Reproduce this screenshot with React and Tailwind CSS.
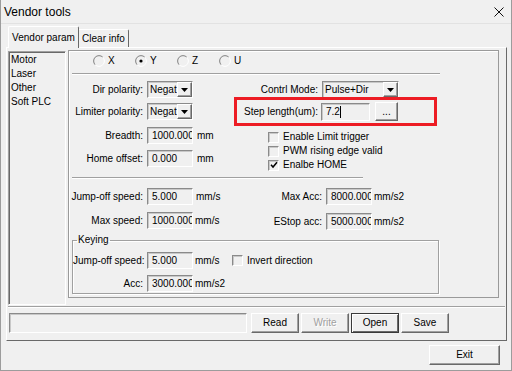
const raised =
  'border border-t-white border-l-white border-r-[#696969] border-b-[#696969] shadow-[inset_-1px_-1px_0_#a0a0a0]';
const sunken =
  'border border-t-[#8a8a8a] border-l-[#8a8a8a] border-r-white border-b-white shadow-[inset_1px_1px_0_#c8c8c8]';

const Edit = ({ className = 'w-[46px] h-[17px]', children, caret }) => (
  <div className={`${className} ${sunken} shrink-0 pl-[4px] flex items-center overflow-hidden whitespace-nowrap`}>
    {children}
    {caret && <span className="w-px h-[12px] bg-black shrink-0" />}
  </div>
);

const Arrow = () => (
  <svg width="7" height="4" viewBox="0 0 7 4">
    <polygon points="0,0 7,0 3.5,4" fill="#000" />
  </svg>
);

const Combo = ({ className, children }) => (
  <div className={`${className} h-[17px] ${sunken} shrink-0 flex items-center overflow-hidden`}>
    <span className="flex-1 pl-[2px] whitespace-nowrap overflow-hidden">{children}</span>
    <div className={`w-[15px] h-[15px] ${raised} bg-[#f0f0f0] flex items-center justify-center`}>
      <Arrow />
    </div>
  </div>
);

const Radio = ({ label, checked }) => (
  <div className="w-[42px] flex items-center">
    <svg width="12" height="12" viewBox="0 0 12 12">
      <path d="M9.8 2.2 A5.3 5.3 0 0 0 2.2 9.8" stroke="#808080" fill="none" />
      <path d="M2.2 9.8 A5.3 5.3 0 0 0 9.8 2.2" stroke="#ffffff" fill="none" />
      {checked && <circle cx="6" cy="6" r="1.6" fill="#000" />}
    </svg>
    <span className="ml-[3px]">{label}</span>
  </div>
);

const Check = ({ label, checked }) => (
  <div className="h-[14px] flex items-center">
    <div className={`w-[11px] h-[11px] ${sunken} bg-[#f0f0f0] flex items-center justify-center`}>
      {checked && (
        <svg width="8" height="8" viewBox="0 0 8 8">
          <path d="M1 3.8 L3 6 L7 1.2" stroke="#000" strokeWidth="1.5" fill="none" />
        </svg>
      )}
    </div>
    <span className="ml-[4px] whitespace-nowrap">{label}</span>
  </div>
);

const Row = ({ label, labelW = 'w-[78px]', children, className = '' }) => (
  <div className={`h-[17px] flex items-center ${className}`}>
    <span className={`${labelW} shrink-0 text-right pr-[4px] whitespace-nowrap`}>{label}</span>
    {children}
  </div>
);

const Btn = ({ children, className = 'w-[48px]', disabled, def }) => (
  <div
    className={`${className} h-[20px] flex items-center justify-center ${
      def
        ? 'border border-[#3a3a3a] shadow-[inset_1px_1px_0_#fff,inset_-1px_-1px_0_#696969]'
        : raised
    } ${disabled ? 'text-[#a0a0a0] [text-shadow:1px_1px_0_#fff]' : ''}`}
  >
    {children}
  </div>
);

const Separator = ({ className }) => (
  <div className={`${className} h-[2px] border-t border-t-[#a0a0a0] border-b border-b-white`} />
);

export default function App() {
  return (
    <div className="w-[512px] h-[371px] bg-[#f0f0f0] border-x border-b border-[#9c9c9c] flex flex-col overflow-hidden font-['Liberation_Sans',Arial,sans-serif] text-[10px] leading-[12px] text-black">
      {/* title bar */}
      <div className="h-[24px] shrink-0 flex items-center justify-between pl-[3px] pr-[7px] border-b border-[#e2e2e2]">
        <span className="text-[12px] leading-[14px]">Vendor tools</span>
        <svg width="10" height="10" viewBox="0 0 10 10">
          <path d="M0.5 0.5 L9.5 9.5 M9.5 0.5 L0.5 9.5" stroke="#111" strokeWidth="1" />
        </svg>
      </div>

      {/* tabs */}
      <div className="h-[23px] shrink-0 flex items-end pl-[7px]">
        <div className="relative z-10 -mb-px w-[71px] h-[22px] bg-[#f0f0f0] border-t border-l border-t-white border-l-white border-r border-r-[#696969] rounded-t-[2px] flex items-center justify-center">
          Vendor param
        </div>
        <div className="w-[50px] h-[18px] border-t border-t-white border-r border-r-[#696969] rounded-tr-[2px] flex items-center justify-center">
          Clear info
        </div>
      </div>

      {/* tab page */}
      <div className="ml-[5px] w-[501px] shrink-0 border border-t-white border-l-white border-r-[#696969] border-b-[#696969] pt-[2px] pb-[7px]">
        <div className="h-[255px] flex items-start pl-px">
          {/* list */}
          <div className="mt-px w-[58px] h-[254px] border border-t-[#a0a0a0] border-l-[#a0a0a0] border-r-white border-b-white shadow-[inset_1px_1px_0_#696969] pl-[2px] pt-px leading-[14px]">
            <div>Motor</div>
            <div>Laser</div>
            <div>Other</div>
            <div>Soft PLC</div>
          </div>

          {/* right panel */}
          <div className="ml-[2px] w-[431px] h-[248px] border border-[#9a9a9a] shadow-[inset_1px_1px_0_#fff] flex flex-col">
            <div className="h-[20px] flex items-center pl-[24px]">
              <Radio label="X" />
              <Radio label="Y" checked />
              <Radio label="Z" />
              <Radio label="U" />
            </div>
            <Separator className="mt-[2px] ml-[3px] w-[368px]" />

            {/* upper block */}
            <div className="flex">
              <div className="w-[165px] pt-[6px] flex flex-col">
                <Row label="Dir polarity:">
                  <Combo className="w-[46px]">Negat</Combo>
                </Row>
                <Row label="Limiter polarity:" className="mt-[5px]">
                  <Combo className="w-[46px]">Negat</Combo>
                </Row>
                <Row label="Breadth:" className="mt-[7px]">
                  <Edit>1000.000</Edit>
                  <span className="ml-[4px]">mm</span>
                </Row>
                <Row label="Home offset:" className="mt-[6px]">
                  <Edit>0.000</Edit>
                  <span className="ml-[4px]">mm</span>
                </Row>
              </div>
              <div className="pt-[6px] flex flex-col">
                <Row label="Contrl Mode:" labelW="w-[88px]">
                  <Combo className="w-[77px]">Pulse+Dir</Combo>
                </Row>
                <div className="-mt-px w-[203px] h-[29px] border-[3px] border-[#ed1c24] flex items-center">
                  <span className="w-[84px] text-right pr-[3px] whitespace-nowrap">Step length(um):</span>
                  <Edit className="w-[49px] h-[18px]" caret>
                    7.2
                  </Edit>
                  <Btn className="ml-[5px] w-[23px] !h-[19px]">...</Btn>
                </div>
                <div className="mt-[4px] ml-[34px] flex flex-col">
                  <Check label="Enable Limit trigger" />
                  <Check label="PWM rising edge valid" />
                  <Check label="Enalbe HOME" checked />
                </div>
              </div>
            </div>

            <Separator className="mt-[5px] ml-[3px] w-[291px]" />

            {/* lower block */}
            <div className="flex">
              <div className="w-[165px] pt-[9px] flex flex-col">
                <Row label="Jump-off speed:">
                  <Edit>5.000</Edit>
                  <span className="ml-[3px]">mm/s</span>
                </Row>
                <Row label="Max speed:" className="mt-[7px]">
                  <Edit>1000.000</Edit>
                  <span className="ml-[2px]">mm/s</span>
                </Row>
              </div>
              <div className="pt-[9px] flex flex-col">
                <Row label="Max Acc:" labelW="w-[92px]">
                  <Edit>8000.000</Edit>
                  <span className="ml-[2px]">mm/s2</span>
                </Row>
                <Row label="EStop acc:" labelW="w-[92px]" className="mt-[8px]">
                  <Edit>5000.000</Edit>
                  <span className="ml-[2px]">mm/s2</span>
                </Row>
              </div>
            </div>

            {/* keying */}
            <fieldset className="mt-[4px] ml-[3px] w-[367px] border border-[#a0a0a0] shadow-[1px_1px_0_#fff,inset_1px_1px_0_#fff] pt-[6px] pb-px">
              <legend className="ml-[4px] px-px leading-[12px]">Keying</legend>
              <Row label="Jump-off speed:" labelW="w-[74px]">
                <Edit>5.000</Edit>
                <span className="ml-[2px] w-[37px]">mm/s</span>
                <Check label="Invert direction" />
              </Row>
              <Row label="Acc:" labelW="w-[74px]" className="mt-[6px]">
                <Edit>3000.000</Edit>
                <span className="ml-[2px]">mm/s2</span>
              </Row>
            </fieldset>
          </div>
        </div>

        <Separator className="mt-px mx-px" />

        <div className="mt-[5px] flex items-center">
          <div className={`ml-[2px] w-[238px] h-[20px] ${sunken}`} />
          <div className="ml-[4px] flex gap-[2px]">
            <Btn>Read</Btn>
            <Btn disabled>Write</Btn>
            <Btn def>Open</Btn>
            <Btn>Save</Btn>
          </div>
        </div>
      </div>

      <div className="mt-[4px] flex justify-end pr-[11px]">
        <Btn className="w-[71px]">Exit</Btn>
      </div>
    </div>
  );
}
